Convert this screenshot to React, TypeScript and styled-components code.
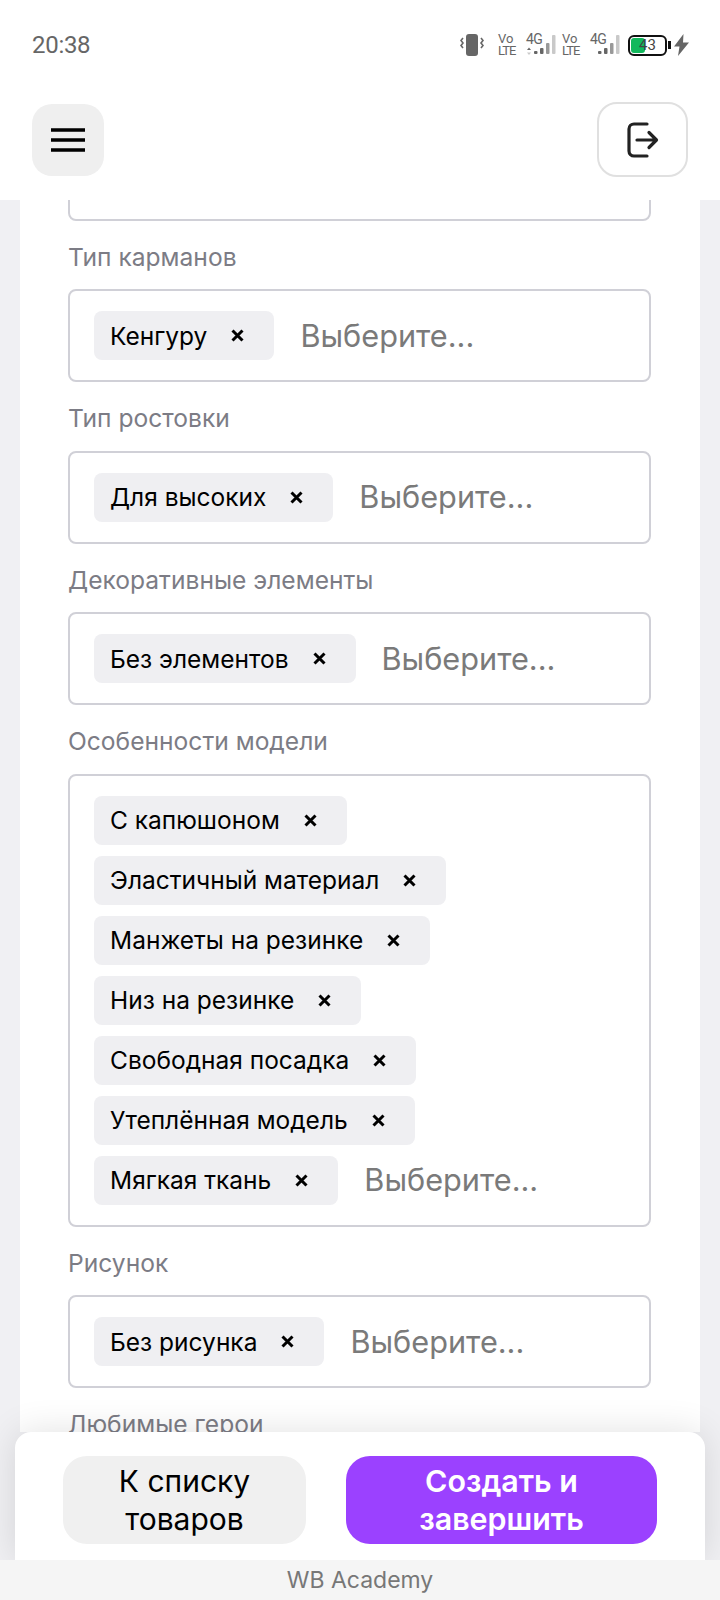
import React from 'react';
import styled, { createGlobalStyle } from 'styled-components';

const GlobalStyle = createGlobalStyle`
  html, body {
    margin: 0;
    padding: 0;
    background: #f0f0f3;
  }
  * {
    box-sizing: border-box;
  }
`;

const Page = styled.div`
  width: 720px;
  height: 1600px;
  display: flex;
  flex-direction: column;
  overflow: hidden;
  background: #f0f0f3;
  font-family: Inter, 'Noto Sans', sans-serif;
`;

const StatusBar = styled.div`
  height: 90px;
  flex: none;
  background: #fff;
  display: flex;
  align-items: center;
  justify-content: space-between;
  padding: 0 31px 0 32px;
  position: relative;
  z-index: 2;
`;

const Time = styled.div`
  font-family: Roboto, sans-serif;
  font-size: 24px;
  letter-spacing: -0.3px;
  color: #666;
`;

const StatusIcons = styled.div`
  display: flex;
  align-items: center;
`;

const Network = styled.div`
  display: flex;
  flex-direction: column;
  align-items: flex-start;
  width: 20px;
  margin-right: 8px;
  font-family: Roboto, sans-serif;
  font-size: 13px;
  line-height: 12px;
  color: #666;
`;

const NetworkLine = styled.span<{ $tight?: boolean }>`
  letter-spacing: ${(p) => (p.$tight ? '-1px' : '0')};
`;

const SignalWrap = styled.div`
  position: relative;
  width: 30px;
  height: 24px;
  margin-right: 6px;
  font-family: Roboto, sans-serif;
  color: #666;
`;

const SignalLabel = styled.span`
  position: absolute;
  left: 0;
  top: -2px;
  font-size: 14px;
  letter-spacing: -0.6px;
`;

const Battery = styled.div`
  position: relative;
  width: 39px;
  height: 21px;
  margin-left: 2px;
  border: 2px solid #111;
  border-radius: 6px;
  overflow: hidden;
  display: flex;
  align-items: center;
  justify-content: center;
  font-family: Roboto, sans-serif;
  font-size: 15px;
  color: #444;
`;

const BatteryFill = styled.div`
  position: absolute;
  left: 1px;
  top: 1px;
  bottom: 1px;
  width: 14px;
  background: #12b85c;
  border-radius: 3px;
`;

const BatteryText = styled.span`
  position: relative;
`;

const BatteryNub = styled.div`
  width: 3px;
  height: 8px;
  margin: 0 3px 0 1px;
  background: #111;
`;

const Header = styled.div`
  height: 110px;
  flex: none;
  background: #fff;
  display: flex;
  align-items: flex-start;
  justify-content: space-between;
  padding: 12px 32px 0 32px;
  position: relative;
  z-index: 2;
`;

const MenuButton = styled.button`
  width: 72px;
  height: 72px;
  margin-top: 2px;
  border: 0;
  border-radius: 20px;
  background: #efefef;
  display: flex;
  align-items: center;
  justify-content: center;
  padding: 0;
`;

const ExitButton = styled.button`
  width: 91px;
  height: 75px;
  border: 2px solid #e0e0e0;
  border-radius: 20px;
  background: #fff;
  display: flex;
  align-items: center;
  justify-content: center;
  padding: 0;
`;

const Content = styled.div`
  flex: 1;
  min-height: 0;
  overflow: hidden;
  margin: 0 20px;
  background: #fff;
`;

const Form = styled.div`
  margin-top: -72.5px;
  padding: 0 49px 0 48px;
`;

const Group = styled.div`
  margin-bottom: 18px;
`;

const Label = styled.div`
  height: 36px;
  margin-bottom: 14.5px;
  font-size: 24.6px;
  line-height: 36px;
  color: #7c7c85;
`;

const Field = styled.div`
  display: flex;
  flex-wrap: wrap;
  align-items: center;
  gap: 11px 26px;
  padding: 20px 24px;
  min-height: 93px;
  border: 2px solid #d0d0d7;
  border-radius: 8px;
  background: #fff;
`;

const Chip = styled.div`
  height: 49px;
  display: flex;
  align-items: center;
  gap: 24px;
  padding: 0 30px 0 16px;
  border-radius: 8px;
  background: #efeff2;
  color: #000;
  font-size: 24.5px;
  white-space: nowrap;
`;

const Placeholder = styled.div`
  font-size: 30.7px;
  line-height: 44px;
  color: #7a7a7a;
`;

const BottomCard = styled.div`
  flex: none;
  height: 128px;
  margin: 0 15px;
  padding: 24px 48px 16px;
  display: flex;
  gap: 40px;
  background: #fff;
  border-radius: 16px 16px 0 0;
  box-shadow: 0 0 36px rgba(0, 0, 0, 0.12);
  position: relative;
  z-index: 1;
`;

const ActionButton = styled.button<{ $primary?: boolean; $width: number }>`
  width: ${(p) => p.$width}px;
  height: 88px;
  flex: none;
  border: 0;
  border-radius: 24px;
  padding: 0 20px;
  background: ${(p) => (p.$primary ? '#9b41ff' : '#f0f0f0')};
  color: ${(p) => (p.$primary ? '#fff' : '#000')};
  font-family: Inter, sans-serif;
  font-size: ${(p) => (p.$primary ? 30.4 : 30)}px;
  font-weight: ${(p) => (p.$primary ? 600 : 400)};
  line-height: 38px;
`;

const Footer = styled.div`
  height: 40px;
  flex: none;
  background: #f5f5f5;
  display: flex;
  align-items: center;
  justify-content: center;
  font-size: 23px;
  color: #777;
  position: relative;
  z-index: 2;
`;

const RemoveIcon = () => (
  <svg width="13" height="13" viewBox="0 0 13 13">
    <path d="M1.5 1.5l10 10M11.5 1.5l-10 10" stroke="#000" strokeWidth="3" />
  </svg>
);

const VibrateIcon = () => (
  <svg width="24" height="22" viewBox="0 0 24 22" style={{ marginRight: 14 }}>
    <rect x="6" y="0" width="12" height="22" rx="3" fill="#666" />
    <path
      d="M3 4l-2 2.5 2 2.5-2 2.5 2 2.5M21 4l2 2.5-2 2.5 2 2.5-2 2.5"
      fill="none"
      stroke="#666"
      strokeWidth="1.6"
    />
  </svg>
);

const SignalBars = ({ arrows }: { arrows?: boolean }) => (
  <svg
    width="30"
    height="24"
    viewBox="0 0 30 24"
    style={{ position: 'absolute', left: 0, top: 0 }}
  >
    {arrows && (
      <>
        <path d="M3 14.5l2 2.5h-4z" fill="#666" />
        <path d="M3 22l2-2.5h-4z" fill="#c9c9c9" />
      </>
    )}
    {[
      [8, 18, 3, '#666'],
      [14, 15, 6, '#666'],
      [20, 10, 11, '#999'],
      [26, 2, 19, '#c9c9c9'],
    ].map(([x, y, h, color]) => (
      <rect
        key={x as number}
        x={x as number}
        y={y as number}
        width="3.5"
        height={h as number}
        rx="1"
        fill={color as string}
      />
    ))}
  </svg>
);

const fields = [
  { label: 'Тип карманов', chips: ['Кенгуру'] },
  { label: 'Тип ростовки', chips: ['Для высоких'] },
  { label: 'Декоративные элементы', chips: ['Без элементов'] },
  {
    label: 'Особенности модели',
    chips: [
      'С капюшоном',
      'Эластичный материал',
      'Манжеты на резинке',
      'Низ на резинке',
      'Свободная посадка',
      'Утеплённая модель',
      'Мягкая ткань',
    ],
  },
  { label: 'Рисунок', chips: ['Без рисунка'] },
];

export default function App() {
  return (
    <Page>
      <GlobalStyle />
      <StatusBar>
        <Time>20:38</Time>
        <StatusIcons>
          <VibrateIcon />
          <Network>
            <NetworkLine>Vo</NetworkLine>
            <NetworkLine $tight>LTE</NetworkLine>
          </Network>
          <SignalWrap>
            <SignalBars arrows />
            <SignalLabel>4G</SignalLabel>
          </SignalWrap>
          <Network>
            <NetworkLine>Vo</NetworkLine>
            <NetworkLine $tight>LTE</NetworkLine>
          </Network>
          <SignalWrap>
            <SignalBars />
            <SignalLabel>4G</SignalLabel>
          </SignalWrap>
          <Battery>
            <BatteryFill />
            <BatteryText>43</BatteryText>
          </Battery>
          <BatteryNub />
          <svg width="15" height="22" viewBox="0 0 15 22">
            <path d="M9.5 0L0 12.5h5.5L4 22l11-13.5H9z" fill="#666" />
          </svg>
        </StatusIcons>
      </StatusBar>
      <Header>
        <MenuButton>
          <svg width="34" height="24" viewBox="0 0 34 24">
            <path d="M0 2h34M0 12h34M0 22h34" stroke="#000" strokeWidth="3.4" />
          </svg>
        </MenuButton>
        <ExitButton>
          <svg width="32" height="36" viewBox="0 0 32 36" fill="none">
            <path
              d="M20 2h-13a5 5 0 0 0-5 5v22a5 5 0 0 0 5 5h13M10 18h19M22 10.500l7.500 7.500-7.500 7.500"
              stroke="#222"
              strokeWidth="3.2"
              strokeLinecap="round"
              strokeLinejoin="round"
            />
          </svg>
        </ExitButton>
      </Header>
      <Content>
        <Form>
          <Group>
            <Field />
          </Group>
          {fields.map((f) => (
            <Group key={f.label}>
              <Label>{f.label}</Label>
              <Field>
                {f.chips.map((c) => (
                  <Chip key={c}>
                    {c}
                    <RemoveIcon />
                  </Chip>
                ))}
                <Placeholder>Выберите...</Placeholder>
              </Field>
            </Group>
          ))}
          <Group>
            <Label>Любимые герои</Label>
          </Group>
        </Form>
      </Content>
      <BottomCard>
        <ActionButton $width={243}>К списку товаров</ActionButton>
        <ActionButton $primary $width={311}>
          Создать и завершить
        </ActionButton>
      </BottomCard>
      <Footer>WB Academy</Footer>
    </Page>
  );
}
